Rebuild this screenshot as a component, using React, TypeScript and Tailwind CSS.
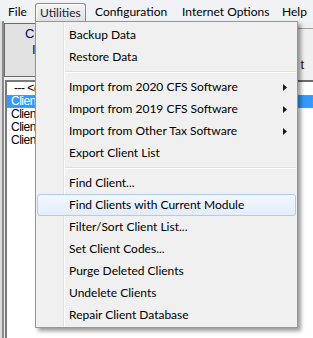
import React from "react";

type Item = { t: string; sub?: boolean; hl?: boolean } | "sep";

const items: Item[] = [
  { t: "Backup Data" },
  { t: "Restore Data" },
  "sep",
  { t: "Import from 2020 CFS Software", sub: true },
  { t: "Import from 2019 CFS Software", sub: true },
  { t: "Import from Other Tax Software", sub: true },
  { t: "Export Client List" },
  "sep",
  { t: "Find Client..." },
  { t: "Find Clients with Current Module", hl: true },
  { t: "Filter/Sort Client List..." },
  { t: "Set Client Codes..." },
  { t: "Purge Deleted Clients" },
  { t: "Undelete Clients" },
  { t: "Repair Client Database" },
];

function Arrow() {
  return (
    <svg
      className="absolute right-[8px] top-[7px]"
      width="4"
      height="7"
      viewBox="0 0 4 7"
    >
      <path d="M0 0 L4 3.5 L0 7 Z" fill="#1a1a1a" />
    </svg>
  );
}

const arial = { fontFamily: "'Liberation Sans',Arial,sans-serif" };

export default function App() {
  return (
    <div className="relative w-[313px] h-[338px] overflow-hidden bg-[#f0f0f0] font-['Lato','Noto_Sans',sans-serif] text-[12px] text-black">
      {/* Menu bar */}
      <div className="flex h-[21px] bg-[#f0f2f5]">
        <div className="ml-[1px] mt-[3px] h-[18px] w-[34px] pl-[7px] flex items-center">
          File
        </div>
        <div className="mt-[3px] h-[18px] w-[51px] pl-[4px] flex items-center rounded-t-[3px] border border-b-0 border-[#8a8a8a] bg-gradient-to-b from-[#f4f4f4] to-[#e2e2e2] shadow-[inset_1px_1px_0_#ffffff] text-[#1b1b3a]">
          Utilities
        </div>
        <div className="mt-[3px] h-[18px] w-[90px] pl-[9px] flex items-center">
          Configuration
        </div>
        <div className="mt-[3px] h-[18px] w-[100px] pl-[6px] flex items-center whitespace-nowrap">
          Internet Options
        </div>
        <div className="mt-[3px] h-[18px] pl-[6px] flex items-center">
          Help
        </div>
      </div>

      {/* Underlying window */}
      <div className="flex h-[317px]">
        {/* Left side */}
        <div className="flex w-[296px] shrink-0">
          <div className="w-[2px] bg-[#dcdcdc]" />
          <div className="w-[2px] bg-[#8a8a8a]" />
          <div className="flex-1 flex flex-col pt-[2px]">
            <div
              className="h-[54px] border-l border-t border-b border-[#6b6b6b] bg-[#e1e1e1] text-[#000080] text-[13px] leading-[16px]"
              style={arial}
            >
              <div className="w-[30px] overflow-hidden whitespace-nowrap pl-[20px] pt-[2px]">Client</div>
              <div className="w-[30px] overflow-hidden whitespace-nowrap pl-[27px]">ID</div>
            </div>
            <div className="h-[3px]" />
            <div
              className="flex-1 ml-[1px] border-l-2 border-t-2 border-[#7a7a7a] bg-white text-[12px] leading-[13px] tracking-[-0.5px]"
              style={arial}
            >
              <div className="h-[13px]">
                <div className="w-[28px] overflow-hidden whitespace-nowrap pl-[7px]">--- &lt;(All)&gt;</div>
              </div>
              <div className="h-[13px] bg-[#3399ff] text-white border border-dotted border-[#c8843f]">
                <div className="w-[27px] overflow-hidden whitespace-nowrap pl-[3px] -mt-[1px]">Client</div>
              </div>
              <div className="h-[13px]">
                <div className="w-[28px] overflow-hidden whitespace-nowrap pl-[4px]">Client</div>
              </div>
              <div className="h-[13px]">
                <div className="w-[28px] overflow-hidden whitespace-nowrap pl-[4px]">Client</div>
              </div>
              <div className="h-[13px]">
                <div className="w-[28px] overflow-hidden whitespace-nowrap pl-[4px]">Client</div>
              </div>
            </div>
          </div>
        </div>

        {/* Right side */}
        <div className="flex-1 flex flex-col pt-[7px] overflow-hidden">
          <div
            className="h-[52px] border-t border-[#a0a0a0] bg-[#f0f0f0] text-[13px] leading-[16px] text-[#3a0a0a] flex justify-end pr-[9px] pt-[28px]"
            style={arial}
          >
            <span className="whitespace-nowrap">t</span>
          </div>
          <div className="flex-1 border-t-2 border-[#6b6b6b] bg-white">
            <div className="h-[13px]" />
            <div className="h-[13px] bg-[#3399ff] border border-dotted border-[#c8843f]" />
          </div>
        </div>
      </div>

      {/* Dropdown menu */}
      <div className="absolute left-[35px] top-[21px] w-[263px] border border-[#979797] bg-[#f0f0f0] pt-[2px] pb-[1px] shadow-[3px_3px_4px_rgba(0,0,0,0.4)]">
        <div className="absolute top-0 bottom-0 left-[27px] w-[2px] border-l border-[#e2e3e3] border-r border-r-white" />
        {items.map((it, i) =>
          it === "sep" ? (
            <div key={i} className="relative h-[8px] ml-[29px] mr-[1px] flex flex-col justify-center">
              <div className="h-[1px] bg-[#e0e0e0]" />
              <div className="h-[1px] bg-white" />
            </div>
          ) : (
            <div
              key={i}
              className={`relative h-[22px] mx-[1px] flex items-center pl-[31px] rounded-[3px] border whitespace-nowrap ${
                it.hl
                  ? "border-[#aeccf1] bg-gradient-to-b from-[#f3f8fe] to-[#e2ecfb]"
                  : "border-transparent"
              }`}
            >
              {it.t}
              {it.sub && <Arrow />}
            </div>
          )
        )}
      </div>
    </div>
  );
}
